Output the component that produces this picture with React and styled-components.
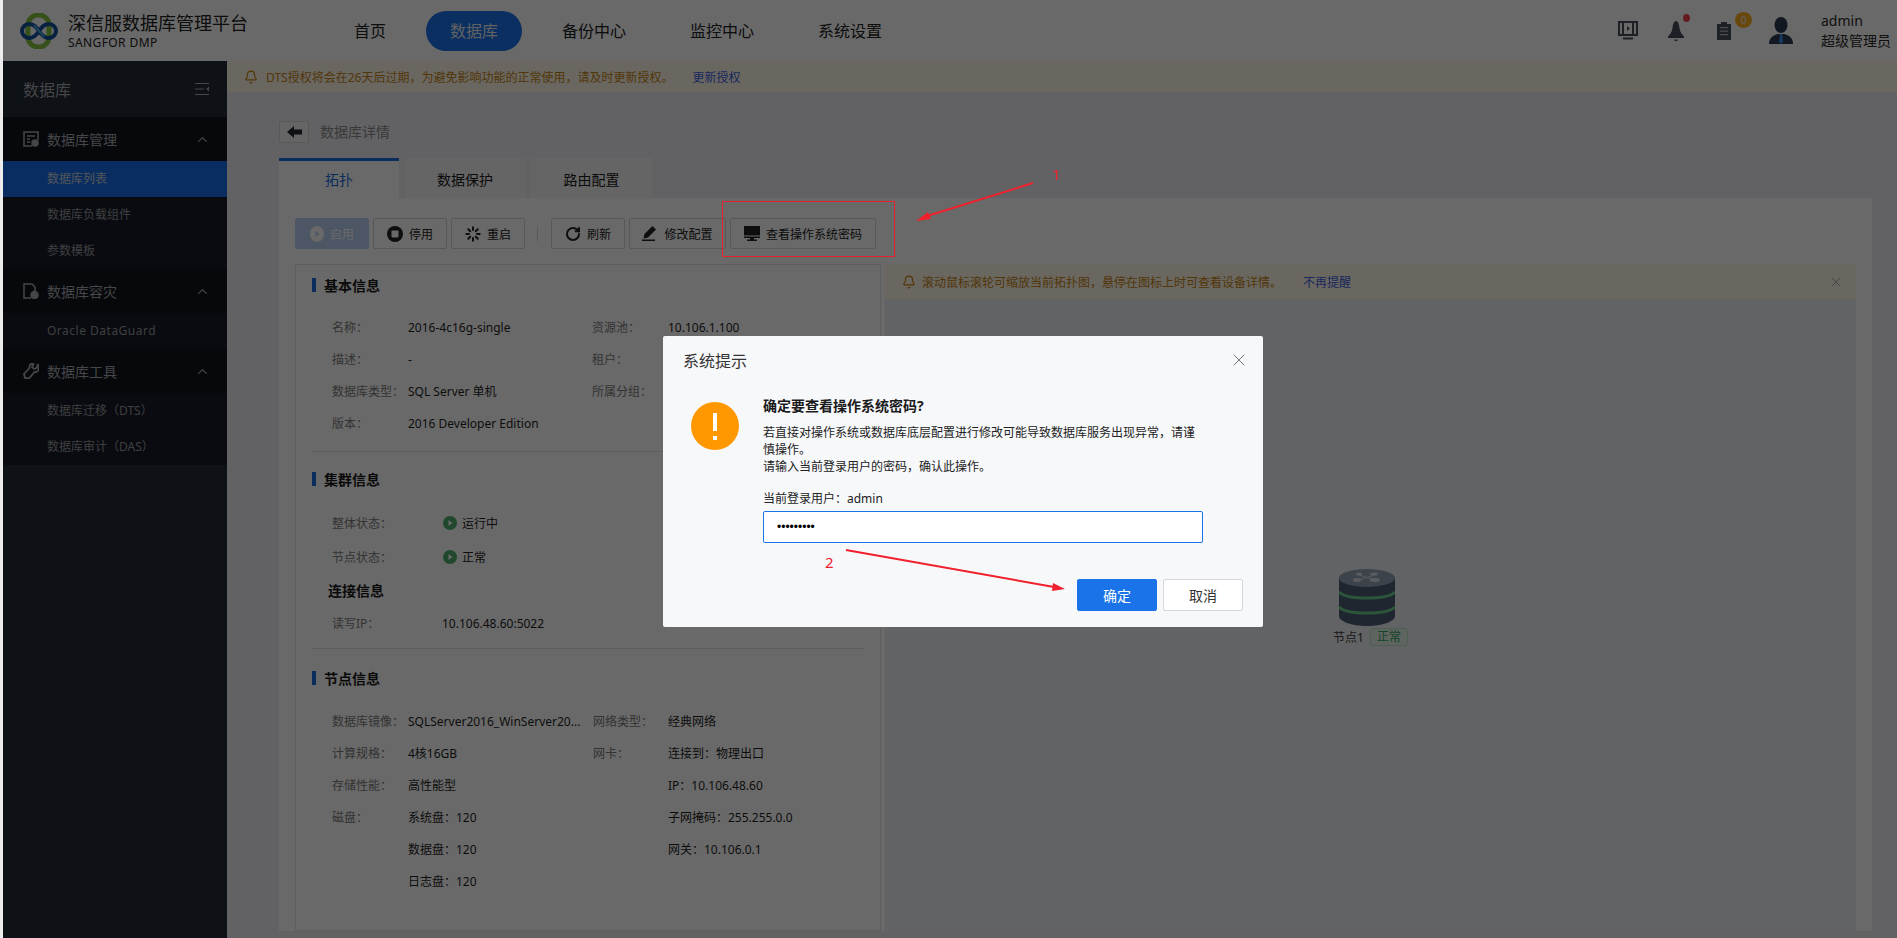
import React from 'react';
import styled, { createGlobalStyle } from 'styled-components';
import { Bell, ChevronUp, ChevronDown, X, Loader, RotateCw } from 'lucide-react';

const GlobalStyle = createGlobalStyle`
  html, body {
    margin: 0;
    height: 100%;
    overflow: hidden;
    background: #ececec;
    font-family: "Noto Sans", "Noto Sans CJK SC", sans-serif;
    font-size: 12px;
  }
`;

const Page = styled.div`
  display: flex;
  flex-direction: column;
  height: 938px;
  margin-left: 3px;
  overflow: hidden;
  background: #eeeff4;
  color: #2a2a2a;
`;

const Header = styled.header`
  display: flex;
  align-items: center;
  flex: none;
  height: 61px;
  padding-left: 16px;
  background: #fff;
  overflow: hidden;
`;

const Brand = styled.div`
  display: flex;
  align-items: center;
  gap: 9px;
  width: 311px;
  flex: none;
`;

const BrandText = styled.div`
  display: flex;
  flex-direction: column;
  color: #222;
`;

const BrandName = styled.div`
  font-size: 18px;
  line-height: 24px;
  white-space: nowrap;
`;

const BrandSub = styled.div`
  font-size: 12px;
  line-height: 16px;
  letter-spacing: 0.4px;
  white-space: nowrap;
`;

const Nav = styled.nav`
  display: flex;
  gap: 16px;
`;

const NavItem = styled.a`
  display: block;
  height: 40px;
  padding: 0 24px;
  border-radius: 20px;
  font-size: 16px;
  line-height: 40px;
  white-space: nowrap;
  color: ${(p) => (p.$active ? '#e6ebf2' : '#222')};
  background: ${(p) => (p.$active ? '#1a73e8' : 'transparent')};
`;

const HeaderRight = styled.div`
  display: flex;
  align-items: center;
  gap: 28px;
  margin-left: auto;
  margin-right: -6px;
`;

const IconSlot = styled.div`
  position: relative;
  display: flex;
  justify-content: center;
  align-items: center;
  width: 20px;
  height: 20px;
  color: #48515c;
`;

const RedDot = styled.span`
  position: absolute;
  top: -7px;
  right: -4px;
  width: 7px;
  height: 8px;
  border-radius: 50%;
  background: #f5414d;
`;

const CountBadge = styled.span`
  position: absolute;
  top: -9px;
  right: -18px;
  width: 17px;
  height: 16px;
  border-radius: 50%;
  background: #ffb020;
  color: #e8e8e8;
  font-size: 10px;
  line-height: 16px;
  text-align: center;
`;

const Avatar = styled.div`
  margin-left: 7px;
  width: 24px;
  height: 27px;
`;

const UserInfo = styled.div`
  display: flex;
  flex-direction: column;
  width: 70px;
  color: #2a2a2a;
  font-size: 14px;
  line-height: 20px;
  white-space: nowrap;
`;

const UserChevron = styled.div`
  width: 8px;
  margin-left: -24px;
  color: #333;
  transform: translateY(-1px);
`;

const Body = styled.div`
  display: flex;
  flex: 1;
  min-height: 0;
`;

const Sidebar = styled.aside`
  flex: none;
  width: 224px;
  background: #222b35;
  color: #a8aaae;
`;

const SideTitle = styled.div`
  display: flex;
  align-items: center;
  justify-content: space-between;
  height: 56px;
  padding: 0 17px 0 20px;
  font-size: 16px;
`;

const SideMenu = styled.div`
  background: #171c28;
`;

const SideGroup = styled.div`
  display: flex;
  align-items: center;
  gap: 8px;
  height: 44px;
  padding: 0 17px 0 20px;
  font-size: 14px;
  background: #10141d;

  span {
    flex: 1;
  }
`;

const SideItem = styled.div`
  height: 36px;
  padding-left: 44px;
  line-height: 36px;
  font-size: 12px;
  letter-spacing: ${(p) => (p.$latin ? '0.5px' : '0')};
  color: ${(p) => (p.$active ? '#c8d0da' : '#98999d')};
  background: ${(p) => (p.$active ? '#186ee8' : 'transparent')};
`;

const Main = styled.main`
  display: flex;
  flex-direction: column;
  flex: 1;
  min-width: 0;
`;

const Notice = styled.div`
  display: flex;
  align-items: center;
  flex: none;
  height: ${(p) => (p.$inset ? '35px' : '31px')};
  padding-left: 17px;
  background: #fff9ea;
  color: #c9800f;
  border-bottom: 1px solid #f2eee0;
  font-size: 12px;
  white-space: nowrap;

  svg {
    flex: none;
    margin-right: ${(p) => (p.$inset ? '6px' : '8px')};
  }
`;

const NoticeText = styled.span`
  color: #c98514;
`;

const NoticeLink = styled.a`
  margin-left: ${(p) => p.$gap}px;
  color: #3f62e0;
`;

const NoticeClose = styled.div`
  display: flex;
  margin-left: auto;
  margin-right: 6px;
  color: #aaa;
`;

const Content = styled.div`
  flex: 1;
  min-height: 0;
  padding: 28px 25px 0 52px;
  overflow: hidden;
`;

const PageHead = styled.div`
  display: flex;
  align-items: center;
  gap: 11px;
  height: 22px;
  font-size: 14px;
  color: #8a8a8a;
`;

const PageTitle = styled.span`
  padding-bottom: 2px;
`;

const BackButton = styled.button`
  display: flex;
  align-items: center;
  justify-content: center;
  width: 30px;
  height: 22px;
  padding: 0;
  background: #f4f5f8;
  border: 1px solid #d6d6d9;
  border-radius: 2px;
`;

const Tabs = styled.div`
  display: flex;
  gap: 6px;
  margin-top: 15px;
`;

const Tab = styled.div`
  width: ${(p) => p.$width}px;
  height: 40px;
  box-sizing: border-box;
  text-align: center;
  font-size: 14px;
  line-height: 37px;
  border-top: 3px solid ${(p) => (p.$active ? '#1a6fe0' : 'transparent')};
  color: ${(p) => (p.$active ? '#1a6fe0' : '#1a1a1a')};
  background: ${(p) => (p.$active ? '#fff' : '#f4f4f7')};
`;

const Panel = styled.div`
  padding: 20px 16px 0;
  background: #fff;
`;

const Toolbar = styled.div`
  display: flex;
  align-items: center;
  gap: 4px;
`;

const ToolButton = styled.button`
  display: flex;
  align-items: center;
  justify-content: center;
  gap: 6px;
  width: ${(p) => p.$width}px;
  height: 31px;
  padding: 0;
  box-sizing: border-box;
  font-family: inherit;
  font-size: 12px;
  color: ${(p) => (p.$disabled ? '#fff' : '#222')};
  background: ${(p) => (p.$disabled ? '#b9d2f2' : '#fff')};
  border: 1px solid ${(p) => (p.$disabled ? '#b9d2f2' : '#d6d6d9')};
  border-radius: 2px;
`;

const ToolDivider = styled.div`
  width: 1px;
  height: 14px;
  margin: 0 9px 0 8px;
  background: #d6d6d9;
`;

const Columns = styled.div`
  display: flex;
  gap: 4px;
  margin-top: 15px;
  height: 667px;
`;

const InfoCard = styled.div`
  flex: none;
  width: 586px;
  box-sizing: border-box;
  padding: 13px 16px 0;
  border: 1px solid #e4e4e6;
`;

const Section = styled.section`
  padding-bottom: ${(p) => p.$bottom ?? 0}px;
  margin-bottom: ${(p) => p.$after ?? 0}px;
  border-bottom: ${(p) => (p.$line ? '1px solid #e4e4e6' : 'none')};
`;

const SectionTitle = styled.div`
  display: flex;
  align-items: center;
  gap: 8px;
  height: 14px;
  margin-bottom: ${(p) => p.$gap}px;
  font-size: 14px;
  font-weight: 700;
  color: #1a1a1a;

  &::before {
    content: '';
    width: 4px;
    height: 14px;
    background: #1a6fe0;
  }
`;

const SubTitle = styled.div`
  height: 33px;
  padding-left: 16px;
  font-size: 14px;
  font-weight: 700;
  line-height: 34px;
  color: #1a1a1a;
`;

const InfoGrid = styled.div`
  display: grid;
  grid-template-columns: ${(p) => p.$cols};
  grid-auto-rows: ${(p) => p.$row}px;
  align-items: center;
  padding-left: 20px;
`;

const Label = styled.div`
  color: #7c7c7c;
  white-space: nowrap;
`;

const Value = styled.div`
  display: flex;
  align-items: center;
  gap: 5px;
  color: #1f1f1f;
  white-space: nowrap;
`;

const TopoCard = styled.div`
  display: flex;
  flex-direction: column;
  flex: 1;
  min-width: 0;
  background: #eef0f5;
`;

const TopoCanvas = styled.div`
  position: relative;
  flex: 1;
`;

const NodeBox = styled.div`
  position: absolute;
  left: 442px;
  top: 269px;
  display: flex;
  flex-direction: column;
  align-items: center;
  width: 80px;
`;

const NodeLabel = styled.div`
  display: flex;
  align-items: center;
  gap: 6px;
  margin-top: 2px;
  margin-left: 7px;
  color: #3c3c3c;
  white-space: nowrap;
`;

const Tag = styled.span`
  width: 38px;
  height: 18px;
  box-sizing: border-box;
  border: 1px solid #bfe3c9;
  border-radius: 3px;
  background: #e5f5ea;
  color: #3aa35c;
  text-align: center;
  line-height: 16px;
`;

const Mask = styled.div`
  position: fixed;
  inset: 0 0 0 3px;
  background: rgba(0, 0, 0, 0.59);
`;

const Dialog = styled.div`
  position: fixed;
  left: 663px;
  top: 336px;
  width: 600px;
  height: 291px;
  background: #f7f8fa;
  border-radius: 2px;
  color: #222;
`;

const DialogHead = styled.div`
  display: flex;
  align-items: center;
  justify-content: space-between;
  height: 47px;
  padding: 0 14px 0 20px;
  font-size: 16px;
  color: #333;

  svg {
    color: #777;
  }
`;

const DialogBody = styled.div`
  display: flex;
  gap: 24px;
  padding: 13px 0 0 28px;
`;

const WarnIcon = styled.div`
  flex: none;
  width: 48px;
  height: 48px;
  margin-top: 6px;
`;

const DialogMain = styled.div`
  width: 440px;
`;

const DialogHeading = styled.div`
  font-size: 14px;
  font-weight: 700;
  line-height: 20px;
  color: #1a1a1a;
`;

const DialogDesc = styled.p`
  margin: 8px 0 0;
  font-size: 12px;
  line-height: 17px;
`;

const FieldLabel = styled.div`
  margin-top: 16px;
  line-height: 16px;
`;

const PasswordInput = styled.input`
  display: block;
  width: 100%;
  height: 32px;
  margin-top: 4px;
  padding: 0 13px;
  box-sizing: border-box;
  font-family: "Liberation Sans", sans-serif;
  font-size: 12px;
  background: #fff;
  color: #000;
  border: 1px solid #1a73e8;
  border-radius: 2px;
  outline: none;
`;

const DialogFoot = styled.div`
  display: flex;
  justify-content: flex-end;
  gap: 6px;
  margin-top: 36px;
  padding-right: 20px;
`;

const DialogButton = styled.button`
  width: 80px;
  height: 32px;
  padding: 0;
  box-sizing: border-box;
  font-family: inherit;
  font-size: 14px;
  border-radius: 2px;
  color: ${(p) => (p.$primary ? '#fff' : '#333')};
  background: ${(p) => (p.$primary ? '#1a73e8' : '#fff')};
  border: 1px solid ${(p) => (p.$primary ? '#1a73e8' : '#d4d7dc')};
`;

const RedBox = styled.div`
  position: fixed;
  left: 722px;
  top: 201px;
  width: 173px;
  height: 56px;
  box-sizing: border-box;
  border: 1px solid #e8202c;
`;

const ArrowLayer = styled.svg`
  position: fixed;
  left: 0;
  top: 0;
  pointer-events: none;
`;

const StepNumber = styled.div`
  position: fixed;
  left: ${(p) => p.$x}px;
  top: ${(p) => p.$y}px;
  font-size: 15px;
  line-height: 16px;
  color: #f0202c;
`;

const Logo = () => (
  <svg width="40" height="36" viewBox="0 0 40 36" fill="none">
    <rect x="9" y="2" width="21" height="32" rx="10" stroke="#86c440" strokeWidth="5" />
    <path d="M20 18c-3-5-6-7-10-7a7 7 0 000 14c4 0 7-2 10-7s6-7 10-7a7 7 0 010 14c-4 0-7-2-10-7" stroke="#15509e" strokeWidth="4" />
    <path d="M15 12l10 12" stroke="#4aa3df" strokeWidth="2" />
  </svg>
);

const Screen = () => (
  <svg width="20" height="19" viewBox="0 0 20 19">
    <path d="M1 1h18v13H1z" fill="none" stroke="currentColor" strokeWidth="2" />
    <path d="M4 1h2v13H4zM14 1h2v13h-2z" fill="currentColor" />
    <path d="M9 5l3 2.500L9 10z" fill="currentColor" />
    <path d="M5 16.500h10v2H5z" fill="currentColor" />
  </svg>
);

const SolidBell = () => (
  <svg width="18" height="20" viewBox="0 0 18 20">
    <path d="M9 0c2 0 3 3 3.500 7 .4 3.500 2 6 4.500 8.500V17H1v-1.500C3.500 13 5 10.500 5.500 7 6 3 7 0 9 0z" fill="currentColor" />
    <path d="M7.500 18.500h3V20h-3z" fill="currentColor" />
  </svg>
);

const Clipboard = () => (
  <svg width="14" height="19" viewBox="0 0 14 19">
    <path d="M0 3h4V1h6v2h4v16H0z" fill="currentColor" />
    <path d="M3 6h8v1.300H3zM3 9.500h8v1.300H3zM3 13h8v1.300H3z" fill="#fff" opacity=".6" />
  </svg>
);

const Person = () => (
  <svg width="24" height="27" viewBox="0 0 24 27">
    <ellipse cx="12" cy="8" rx="6.500" ry="8" fill="#2a3a50" />
    <path d="M0 27c0-6 4-9 9-10h6c5 1 9 4 9 10z" fill="#2a3a50" />
    <path d="M11 17h2l1 8-2 2-2-2z" fill="#3a8cf0" />
  </svg>
);

const CollapseIcon = () => (
  <svg width="15" height="12" viewBox="0 0 15 12" stroke="currentColor" fill="none">
    <path d="M0 .5h14M0 6h9M0 11.500h14" />
    <path d="M14 3.500v5L11 6z" fill="currentColor" stroke="none" />
  </svg>
);

const DbManageIcon = () => (
  <svg width="16" height="16" viewBox="0 0 16 16" fill="none" stroke="currentColor" strokeWidth="1.500">
    <path d="M9 15H1V1h14v8" />
    <path d="M4 5h8M4 8h3M4 11h3" />
    <circle cx="12" cy="12" r="3" fill="currentColor" />
  </svg>
);

const DbDisasterIcon = () => (
  <svg width="16" height="16" viewBox="0 0 16 16" fill="none" stroke="currentColor" strokeWidth="1.500">
    <path d="M8 15H1V1h8l3 3v4" />
    <circle cx="11.500" cy="12" r="3.500" fill="currentColor" />
  </svg>
);

const WrenchIcon = () => (
  <svg width="16" height="16" viewBox="0 0 16 16" fill="none" stroke="currentColor" strokeWidth="1.800">
    <path d="M15 1l-1.500 4L11 6 9 4l1.500-3C8 0 6 2 6.500 5L1 11l1 4 4 .5L11.500 9c2.500.5 4.500-1.500 4-4z" />
  </svg>
);

const BackArrow = () => (
  <svg width="15" height="12" viewBox="0 0 15 12">
    <path d="M7 0v3.500h8v5H7V12L0 6z" fill="#25272e" />
  </svg>
);

const PlayIcon = () => (
  <svg width="14" height="16" viewBox="0 0 14 16">
    <ellipse cx="7" cy="8" rx="7" ry="8" fill="currentColor" />
    <path d="M5.500 5l4 3-4 3z" fill="#b9d2f2" />
  </svg>
);

const StopIcon = () => (
  <svg width="16" height="16" viewBox="0 0 16 16">
    <circle cx="8" cy="8" r="8" fill="#222" />
    <rect x="4.500" y="4.500" width="7" height="7" rx="1" fill="#fff" />
  </svg>
);

const EditIcon = () => (
  <svg width="16" height="15" viewBox="0 0 16 15">
    <path d="M10.500 0L14 3.500 6 11.500l-4.500 1L2.500 8z" fill="#222" />
    <path d="M0 13.500h13V15H0z" fill="#222" />
  </svg>
);

const DesktopIcon = () => (
  <svg width="16" height="15" viewBox="0 0 16 15">
    <path d="M0 0h16v9.500H0zM0 10.500h16V12H0zM6 12h4v1.500h3V15H3v-1.500h3z" fill="#222" />
  </svg>
);

const StatusDot = () => (
  <svg width="14" height="14" viewBox="0 0 14 14">
    <circle cx="7" cy="7" r="7" fill="#4caf6e" />
    <path d="M5.500 4l4 3-4 3z" fill="#fff" />
  </svg>
);

const DatabaseNode = () => (
  <svg width="56" height="57" viewBox="0 0 56 57">
    <path d="M0 9v38c0 5 12 10 28 10s28-5 28-10V9z" fill="#4c5d72" />
    <ellipse cx="28" cy="9" rx="28" ry="9" fill="#94a3b5" />
    <path d="M0 23c4 4 14 6 28 6s24-2 28-6M0 38c4 4 14 6 28 6s24-2 28-6" fill="none" stroke="#6ccf8a" strokeWidth="3" />
    <ellipse cx="18" cy="11" rx="4" ry="2" fill="#d8dee6" />
    <ellipse cx="36" cy="11" rx="5" ry="2" fill="#d8dee6" />
    <ellipse cx="20" cy="5" rx="3" ry="1.500" fill="#d8dee6" />
    <ellipse cx="35" cy="5" rx="4" ry="1.500" fill="#d8dee6" />
    <path d="M20 6l16 5M36 6l-16 5" stroke="#d8dee6" />
  </svg>
);

const WarnCircle = () => (
  <svg width="48" height="48" viewBox="0 0 48 48">
    <circle cx="24" cy="24" r="24" fill="#ff9800" />
    <rect x="22" y="11" width="4" height="18" fill="#fff" />
    <rect x="22" y="34" width="4" height="4" fill="#fff" />
  </svg>
);

const basicRows = [
  ['名称：', '2016-4c16g-single', '资源池：', '10.106.1.100'],
  ['描述：', '-', '租户：', ''],
  ['数据库类型：', 'SQL Server 单机', '所属分组：', ''],
  ['版本：', '2016 Developer Edition', '', ''],
];

const nodeRows = [
  ['数据库镜像：', 'SQLServer2016_WinServer20...', '网络类型：', '经典网络'],
  ['计算规格：', '4核16GB', '网卡：', '连接到：物理出口'],
  ['存储性能：', '高性能型', '', 'IP：10.106.48.60'],
  ['磁盘：', '系统盘：120', '', '子网掩码：255.255.0.0'],
  ['', '数据盘：120', '', '网关：10.106.0.1'],
  ['', '日志盘：120', '', ''],
];

const menu = [
  { title: '数据库管理', icon: <DbManageIcon />, items: [['数据库列表', true], ['数据库负载组件'], ['参数模板']] },
  { title: '数据库容灾', icon: <DbDisasterIcon />, items: [['Oracle DataGuard', false, true]] },
  { title: '数据库工具', icon: <WrenchIcon />, items: [['数据库迁移（DTS）'], ['数据库审计（DAS）']] },
];

const renderRows = (rows) =>
  rows.flat().map((text, i) =>
    i % 2 === 0 ? <Label key={i}>{text}</Label> : <Value key={i}>{text}</Value>,
  );

export default function App() {
  return (
    <>
      <GlobalStyle />
      <Page>
        <Header>
          <Brand>
            <Logo />
            <BrandText>
              <BrandName>深信服数据库管理平台</BrandName>
              <BrandSub>SANGFOR DMP</BrandSub>
            </BrandText>
          </Brand>
          <Nav>
            <NavItem>首页</NavItem>
            <NavItem $active>数据库</NavItem>
            <NavItem>备份中心</NavItem>
            <NavItem>监控中心</NavItem>
            <NavItem>系统设置</NavItem>
          </Nav>
          <HeaderRight>
            <IconSlot>
              <Screen />
            </IconSlot>
            <IconSlot>
              <SolidBell />
              <RedDot />
            </IconSlot>
            <IconSlot>
              <Clipboard />
              <CountBadge>0</CountBadge>
            </IconSlot>
            <Avatar>
              <Person />
            </Avatar>
            <UserInfo>
              <div>admin</div>
              <div>超级管理员</div>
            </UserInfo>
            <UserChevron>
              <ChevronDown size={10} />
            </UserChevron>
          </HeaderRight>
        </Header>
        <Body>
          <Sidebar>
            <SideTitle>
              数据库
              <CollapseIcon />
            </SideTitle>
            <SideMenu>
              {menu.map((group) => (
                <div key={group.title}>
                  <SideGroup>
                    {group.icon}
                    <span>{group.title}</span>
                    <ChevronUp size={15} />
                  </SideGroup>
                  {group.items.map(([label, active, latin]) => (
                    <SideItem key={label} $active={active} $latin={latin}>
                      {label}
                    </SideItem>
                  ))}
                </div>
              ))}
            </SideMenu>
          </Sidebar>
          <Main>
            <Notice>
              <Bell size={14} />
              <NoticeText>DTS授权将会在26天后过期，为避免影响功能的正常使用，请及时更新授权。</NoticeText>
              <NoticeLink $gap={19}>更新授权</NoticeLink>
            </Notice>
            <Content>
              <PageHead>
                <BackButton>
                  <BackArrow />
                </BackButton>
                <PageTitle>数据库详情</PageTitle>
              </PageHead>
              <Tabs>
                <Tab $active $width={120}>拓扑</Tab>
                <Tab $width={120}>数据保护</Tab>
                <Tab $width={121}>路由配置</Tab>
              </Tabs>
              <Panel>
                <Toolbar>
                  <ToolButton $disabled $width={74}>
                    <PlayIcon />
                    启用
                  </ToolButton>
                  <ToolButton $width={74}>
                    <StopIcon />
                    停用
                  </ToolButton>
                  <ToolButton $width={74}>
                    <Loader size={16} strokeWidth={3} color="#222" />
                    重启
                  </ToolButton>
                  <ToolDivider />
                  <ToolButton $width={74}>
                    <RotateCw size={16} strokeWidth={3} color="#222" />
                    刷新
                  </ToolButton>
                  <ToolButton $width={97}>
                    <EditIcon />
                    修改配置
                  </ToolButton>
                  <ToolButton $width={146}>
                    <DesktopIcon />
                    查看操作系统密码
                  </ToolButton>
                </Toolbar>
                <Columns>
                  <InfoCard>
                    <Section $line $bottom={12} $after={20}>
                      <SectionTitle $gap={19}>基本信息</SectionTitle>
                      <InfoGrid $cols="76px 184px 76px 1fr" $row={32}>
                        {renderRows(basicRows)}
                      </InfoGrid>
                    </Section>
                    <Section $line $bottom={9} $after={22}>
                      <SectionTitle $gap={20}>集群信息</SectionTitle>
                      <InfoGrid $cols="111px 1fr" $row={34}>
                        <Label>整体状态：</Label>
                        <Value>
                          <StatusDot />
                          运行中
                        </Value>
                        <Label>节点状态：</Label>
                        <Value>
                          <StatusDot />
                          正常
                        </Value>
                      </InfoGrid>
                      <SubTitle>连接信息</SubTitle>
                      <InfoGrid $cols="110px 1fr" $row={32}>
                        <Label>读写IP：</Label>
                        <Value>10.106.48.60:5022</Value>
                      </InfoGrid>
                    </Section>
                    <Section>
                      <SectionTitle $gap={20}>节点信息</SectionTitle>
                      <InfoGrid $cols="76px 185px 75px 1fr" $row={32}>
                        {renderRows(nodeRows)}
                      </InfoGrid>
                    </Section>
                  </InfoCard>
                  <TopoCard>
                    <Notice $inset>
                      <Bell size={14} />
                      <NoticeText>滚动鼠标滚轮可缩放当前拓扑图，悬停在图标上时可查看设备详情。</NoticeText>
                      <NoticeLink $gap={21}>不再提醒</NoticeLink>
                      <NoticeClose>
                        <X size={16} strokeWidth={1.5} />
                      </NoticeClose>
                    </Notice>
                    <TopoCanvas>
                      <NodeBox>
                        <DatabaseNode />
                        <NodeLabel>
                          节点1
                          <Tag>正常</Tag>
                        </NodeLabel>
                      </NodeBox>
                    </TopoCanvas>
                  </TopoCard>
                </Columns>
              </Panel>
            </Content>
          </Main>
        </Body>
      </Page>
      <Mask />
      <Dialog>
        <DialogHead>
          系统提示
          <X size={20} strokeWidth={1.2} />
        </DialogHead>
        <DialogBody>
          <WarnIcon>
            <WarnCircle />
          </WarnIcon>
          <DialogMain>
            <DialogHeading>确定要查看操作系统密码?</DialogHeading>
            <DialogDesc>
              若直接对操作系统或数据库底层配置进行修改可能导致数据库服务出现异常，请谨慎操作。
              <br />
              请输入当前登录用户的密码，确认此操作。
            </DialogDesc>
            <FieldLabel>当前登录用户：admin</FieldLabel>
            <PasswordInput type="password" defaultValue="123456789" />
          </DialogMain>
        </DialogBody>
        <DialogFoot>
          <DialogButton $primary>确定</DialogButton>
          <DialogButton>取消</DialogButton>
        </DialogFoot>
      </Dialog>
      <RedBox />
      <ArrowLayer width="1897" height="938" viewBox="0 0 1897 938">
        <path d="M1033 183L924 217M846 550L1054 587" stroke="#f0202c" strokeWidth="2" />
        <path d="M916 221l12-9 3 7zM1065 589l-12-6-1 8z" fill="#f0202c" />
      </ArrowLayer>
      <StepNumber $x={1052} $y={166}>1</StepNumber>
      <StepNumber $x={825} $y={554}>2</StepNumber>
    </>
  );
}
